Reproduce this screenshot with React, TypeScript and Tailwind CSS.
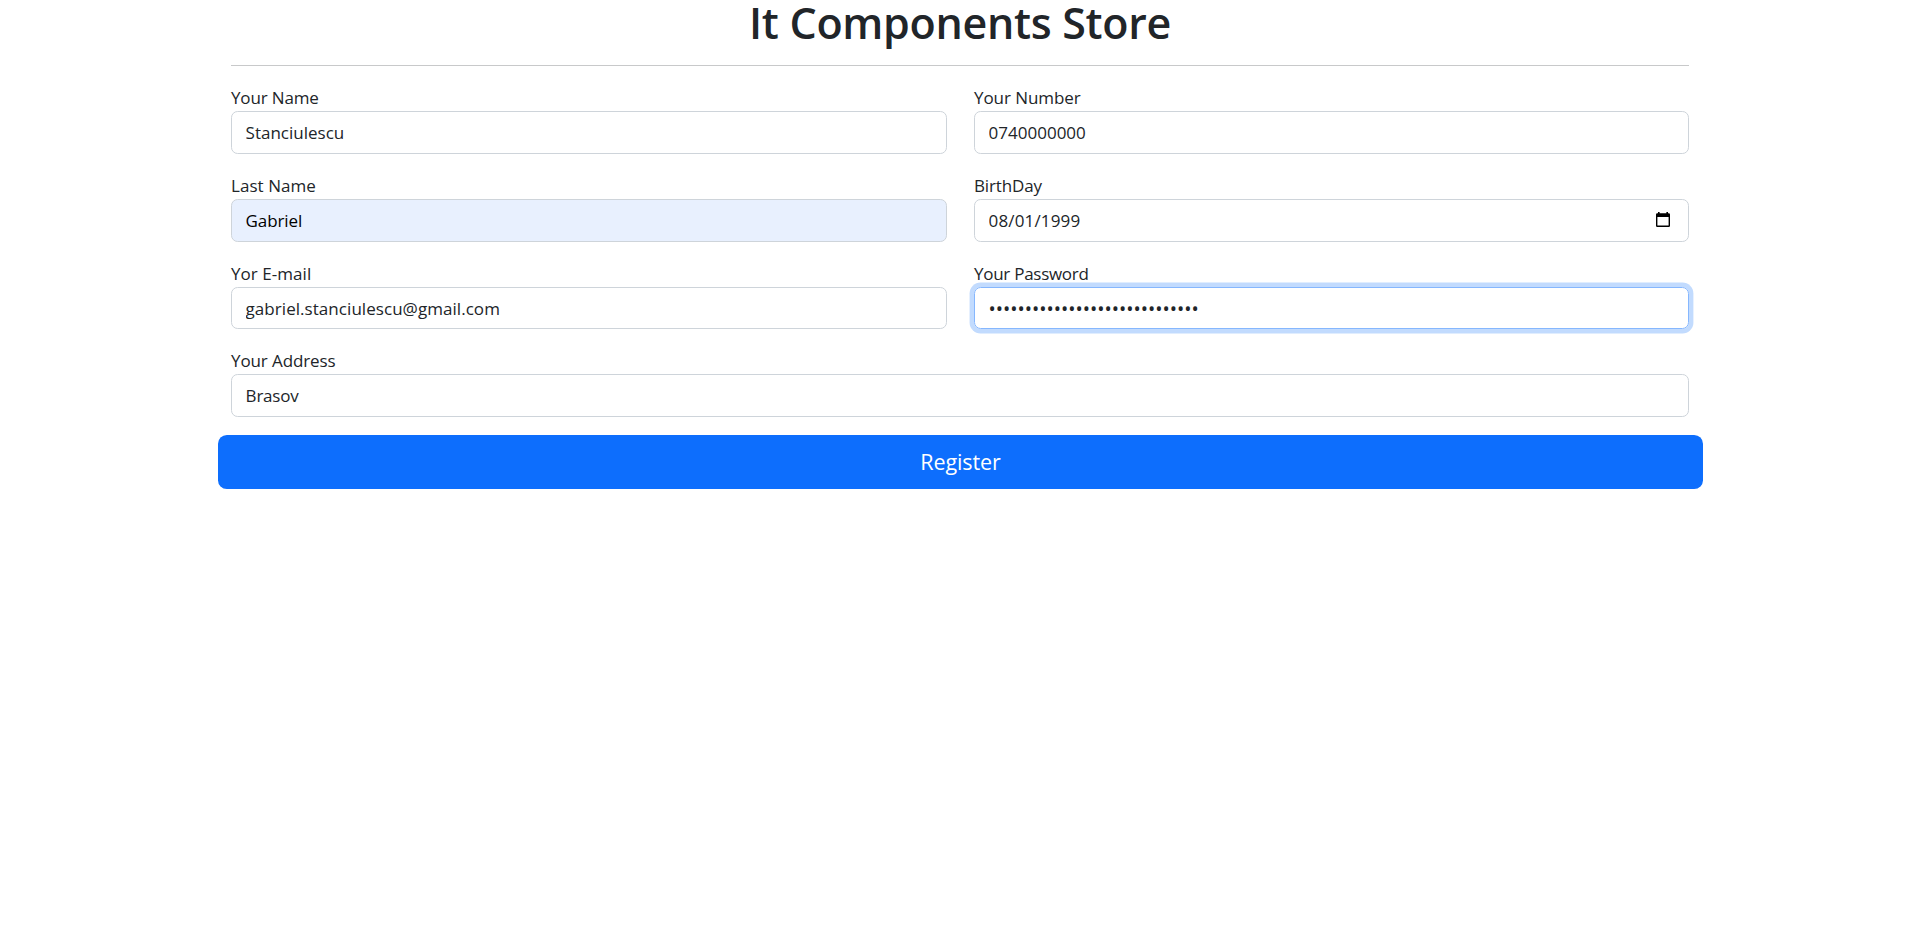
import type { ReactNode } from "react";

type FieldProps = {
  id: string;
  label: string;
  labelClass: string;
  value: string;
  type?: string;
  inputClass: string;
  children?: ReactNode;
};

function Field({ id, label, labelClass, value, type = "text", inputClass, children }: FieldProps) {
  return (
    <div className="min-w-0">
      <label htmlFor={id} className={`block h-[27px] pt-px whitespace-nowrap leading-[26px] ${labelClass}`}>
        {label}
      </label>
      <div className="relative">
        <input
          id={id}
          type={type}
          defaultValue={value}
          className={`block w-full rounded-[6.6px] border px-[13.6px] outline-none ${inputClass}`}
        />
        {children}
      </div>
    </div>
  );
}

function CalendarIcon() {
  return (
    <svg
      viewBox="0 0 14 16"
      className="pointer-events-none absolute top-[13px] right-[19px] h-4 w-3.5"
      fill="#000"
      aria-hidden="true"
    >
      <path
        fillRule="evenodd"
        d="M2 0h1.6v1.2h6.8V0H12v1.2h.7q1.3 0 1.3 1.3v11.2q0 1.3-1.3 1.3H1.3Q0 15 0 13.700V2.500Q0 1.200 1.300 1.200H2ZM1.400 5v8.600h11.200v-8.600Z"
      />
    </svg>
  );
}

export default function App() {
  return (
    <main className="h-[931px] overflow-hidden bg-white font-['Open_Sans','Noto_Sans',sans-serif] text-[17px] text-[#212529]">
      <div className="ml-[218px] w-[1485px]">
        <div className="mr-[14px] ml-[13px]">
          <h1 className="h-[65px] text-center text-[43px] leading-[46px] font-semibold tracking-[-0.3px]">
            It Components Store
          </h1>
          <hr className="border-t border-[#c8c9ca]" />
          <form className="grid grid-cols-[716px_715px] gap-x-[27px] pt-[18px]">
            <div className="h-[88px]">
              <Field id="name" label="Your Name" labelClass="tracking-[-0.15px]" value="Stanciulescu" inputClass="h-[43px] border-[#ced4da] tracking-[0px]" />
            </div>
            <div className="h-[88px]">
              <Field id="number" label="Your Number" labelClass="tracking-[-0.07px]" value="0740000000" inputClass="h-[43px] border-[#ced4da] tracking-[0px]" />
            </div>
            <div className="h-[88px]">
              <Field id="last" label="Last Name" labelClass="tracking-[0.05px]" value="Gabriel" inputClass="h-[43px] border-[#ced4da] bg-[#e8f0fe] text-black tracking-[-0.1px]" />
            </div>
            <div className="h-[88px]">
              <Field id="birthday" label="BirthDay" labelClass="tracking-[-0.15px]" value="08/01/1999" inputClass="h-[43px] border-[#ced4da] tracking-[0.15px]">
                <CalendarIcon />
              </Field>
            </div>
            <div className="h-[87px]">
              <Field id="email" label="Yor E-mail" labelClass="tracking-[0.05px]" value="gabriel.stanciulescu@gmail.com" inputClass="h-[42px] border-[#ced4da] tracking-[0.05px]" />
            </div>
            <div className="h-[87px]">
              <Field id="password" label="Your Password" labelClass="tracking-[-0.27px]" type="password" value="aaaaaaaaaaaaaaaaaaaaaaaaaaaaa" inputClass="h-[42px] border-[#86b7fe] pt-px text-[19.3px] shadow-[0_0_0_4.4px_rgba(13,110,253,0.25)]" />
            </div>
            <div className="col-span-2 h-[88px]">
              <Field id="address" label="Your Address" labelClass="tracking-[-0.1px]" value="Brasov" inputClass="h-[43px] border-[#ced4da] tracking-[-0.2px]" />
            </div>
          </form>
        </div>
        <button type="button" className="block h-[54px] w-full rounded-[8.8px] bg-[#0d6efd] text-[21.5px] leading-[54px] tracking-[-0.1px] text-white">
          Register
        </button>
      </div>
    </main>
  );
}
